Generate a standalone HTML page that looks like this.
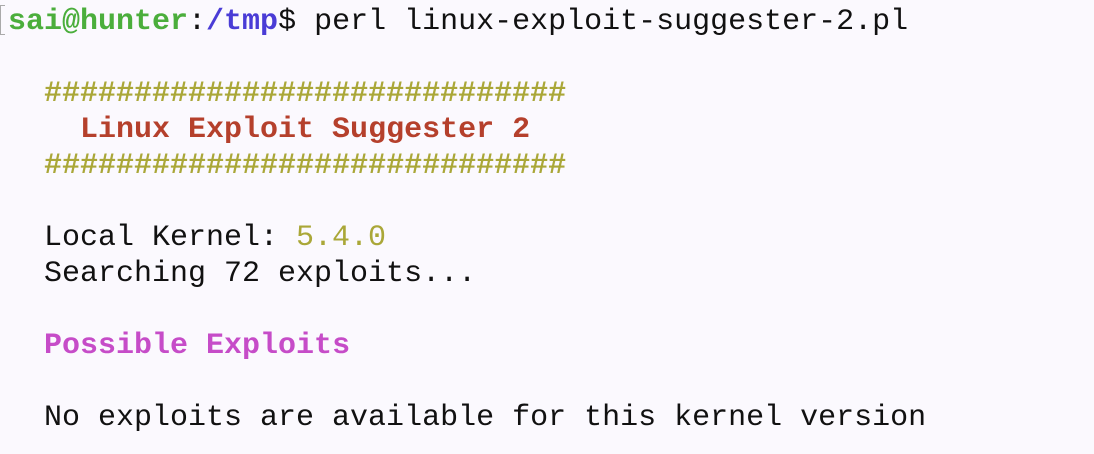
<!DOCTYPE html>
<html><head><meta charset="utf-8"><style>
html,body{margin:0;padding:0;background:#fbf9fe;width:1094px;height:454px;overflow:hidden}
pre{margin:0;position:absolute;left:8px;top:4px;font-family:"Liberation Mono",monospace;font-size:30px;line-height:36px;color:#111}
.g{color:#4bae3c;font-weight:bold}.b{color:#4a3cd6;font-weight:bold}
.y{color:#aaa738;font-weight:bold}.r{color:#b5402c;font-weight:bold}
.m{color:#c64cc8;font-weight:bold}.n{color:#aaa738}
.br{position:absolute;left:0;top:5px;height:30px;border:1px solid #aaa;border-right:none;box-sizing:border-box;width:5px}
</style></head><body>
<div class="br"></div>
<pre><span class="g">sai@hunter</span>:<span class="b">/tmp</span>$ perl linux-exploit-suggester-2.pl

  <span class="y">#############################</span>
    <span class="r">Linux Exploit Suggester 2</span>
  <span class="y">#############################</span>

  Local Kernel: <span class="n">5.4.0</span>
  Searching 72 exploits...

  <span class="m">Possible Exploits</span>

  No exploits are available for this kernel version</pre>
</body></html>
